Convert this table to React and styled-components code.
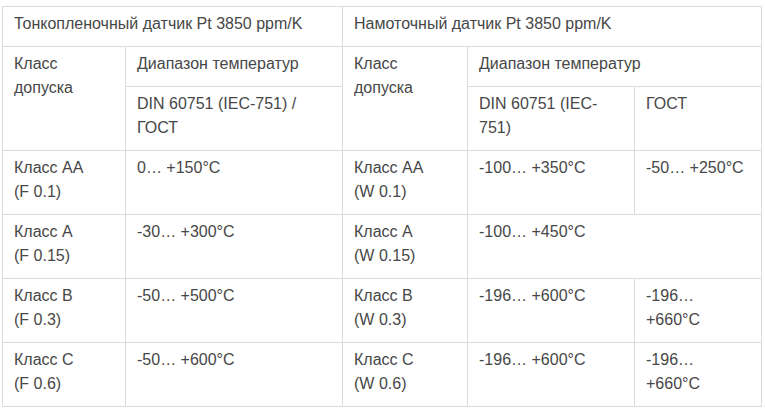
import React from "react";
import styled, { createGlobalStyle } from "styled-components";

const GlobalStyle = createGlobalStyle`
  html, body {
    margin: 0;
    padding: 0;
    background: #fff;
  }
  body {
    font-family: "Liberation Sans", Arial, sans-serif;
  }
`;

const Wrapper = styled.div`
  padding: 6px 0 0 2px;
`;

const Table = styled.table`
  width: 759px;
  table-layout: fixed;
  border-collapse: collapse;
  font-size: 16px;
  line-height: 24px;
  color: #474747;
`;

const Cell = styled.td`
  border: 1px solid #dcdcdc;
  padding: 5px 11px 10px;
  vertical-align: top;
  text-align: left;
  font-weight: normal;
`;

const HeadCell = styled(Cell).attrs({ as: "th" })``;

// строки с данными: класс слева, диапазоны, класс справа, диапазоны
const rows = [
  {
    left: ["Класс AA", "(F 0.1)"],
    leftRange: "0… +150°C",
    right: ["Класс AA", "(W 0.1)"],
    din: "-100… +350°C",
    gost: ["-50… +250°C"],
  },
  {
    left: ["Класс A", "(F 0.15)"],
    leftRange: "-30… +300°C",
    right: ["Класс A", "(W 0.15)"],
    din: "-100… +450°C",
    gost: null,
  },
  {
    left: ["Класс B", "(F 0.3)"],
    leftRange: "-50… +500°C",
    right: ["Класс B", "(W 0.3)"],
    din: "-196… +600°C",
    gost: ["-196…", "+660°C"],
  },
  {
    left: ["Класс C", "(F 0.6)"],
    leftRange: "-50… +600°C",
    right: ["Класс C", "(W 0.6)"],
    din: "-196… +600°C",
    gost: ["-196…", "+660°C"],
  },
];

const Lines = ({ items }) =>
  items.map((t, i) => (
    <React.Fragment key={i}>
      {i > 0 && <br />}
      {t}
    </React.Fragment>
  ));

const App = () => {
  return (
    <Wrapper>
      <GlobalStyle />
      <Table>
        <colgroup>
          <col style={{ width: 123 }} />
          <col style={{ width: 217 }} />
          <col style={{ width: 125 }} />
          <col style={{ width: 167 }} />
          <col style={{ width: 127 }} />
        </colgroup>
        <thead>
          <tr>
            <HeadCell colSpan={2}>Тонкопленочный датчик Pt 3850 ppm/K</HeadCell>
            <HeadCell colSpan={3}>Намоточный датчик Pt 3850 ppm/K</HeadCell>
          </tr>
        </thead>
        <tbody>
          <tr>
            <Cell rowSpan={2}>Класс допуска</Cell>
            <Cell>Диапазон температур</Cell>
            <Cell rowSpan={2}>Класс допуска</Cell>
            <Cell colSpan={2}>Диапазон температур</Cell>
          </tr>
          <tr>
            <Cell>DIN 60751 (IEC-751) / ГОСТ</Cell>
            <Cell>DIN 60751 (IEC-751)</Cell>
            <Cell>ГОСТ</Cell>
          </tr>
          {rows.map((r) => (
            <tr key={r.right[1]}>
              <Cell>
                <Lines items={r.left} />
              </Cell>
              <Cell>{r.leftRange}</Cell>
              <Cell>
                <Lines items={r.right} />
              </Cell>
              {r.gost ? (
                <>
                  <Cell>{r.din}</Cell>
                  <Cell>
                    <Lines items={r.gost} />
                  </Cell>
                </>
              ) : (
                <Cell colSpan={2}>{r.din}</Cell>
              )}
            </tr>
          ))}
        </tbody>
      </Table>
    </Wrapper>
  );
};

export default App;
